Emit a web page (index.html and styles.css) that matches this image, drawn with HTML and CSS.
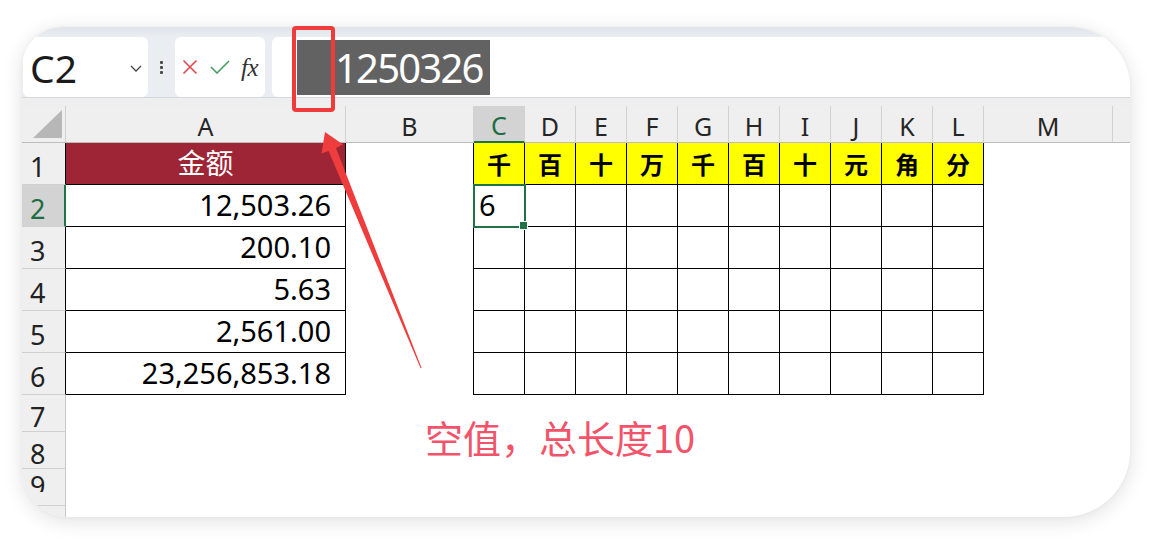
FILE: index.html
```html
<!DOCTYPE html>
<html lang="zh-CN">
<head>
<meta charset="utf-8">
<title>Excel</title>
<link rel="stylesheet" href="styles.css">
</head>
<body>
<div class="page">
  <div class="card">
    <div class="toolbar">
      <div class="namebox">
        <span class="ref">C2</span>
        <svg class="chev" width="12" height="7" viewBox="0 0 12 7"><polyline points="1,1 6,6 11,1" fill="none" stroke="#444" stroke-width="1.3"/></svg>
      </div>
      <div class="grip"><i></i><i></i><i></i></div>
      <div class="fnbox">
        <svg class="ico-x" width="16" height="16" viewBox="0 0 16 16"><path d="M1.5 1.5 L14.5 14.5 M14.5 1.5 L1.5 14.5" stroke="#e0484e" stroke-width="1.6" fill="none"/></svg>
        <svg class="ico-ok" width="20" height="14" viewBox="0 0 20 14"><polyline points="1,7 7,13 19,1" fill="none" stroke="#44a062" stroke-width="1.6"/></svg>
        <span class="fx">fx</span>
      </div>
      <div class="formula"><span class="sel">1250326</span></div>
    </div>
    <div class="strip"></div>
    <div class="sheet">
      <div class="corner"><svg width="29" height="28" viewBox="0 0 29 28"><polygon points="0,28 29,28 29,0" fill="#b7b7b7"/></svg></div>
      <div class="ch">A</div><div class="ch">B</div><div class="ch csel">C</div><div class="ch">D</div><div class="ch">E</div><div class="ch">F</div><div class="ch">G</div><div class="ch">H</div><div class="ch">I</div><div class="ch">J</div><div class="ch">K</div><div class="ch">L</div><div class="ch">M</div><div class="ch"></div>

      <div class="rh rb">1</div><div class="c amt">金额</div><div class="c br"></div>
      <div class="c hd bx">千</div><div class="c hd bx">百</div><div class="c hd bx">十</div><div class="c hd bx">万</div><div class="c hd bx">千</div><div class="c hd bx">百</div><div class="c hd bx">十</div><div class="c hd bx">元</div><div class="c hd bx">角</div><div class="c hd bx">分</div>
      <div></div><div></div>

      <div class="rh rsel">2</div><div class="c num bx">12,503.26</div><div class="c br"></div>
      <div class="c bx active">6</div><div class="c bx"></div><div class="c bx"></div><div class="c bx"></div><div class="c bx"></div><div class="c bx"></div><div class="c bx"></div><div class="c bx"></div><div class="c bx"></div><div class="c bx"></div>
      <div></div><div></div>

      <div class="rh rb">3</div><div class="c num bx">200.10</div><div class="c br"></div>
      <div class="c bx"></div><div class="c bx"></div><div class="c bx"></div><div class="c bx"></div><div class="c bx"></div><div class="c bx"></div><div class="c bx"></div><div class="c bx"></div><div class="c bx"></div><div class="c bx"></div>
      <div></div><div></div>

      <div class="rh rb">4</div><div class="c num bx">5.63</div><div class="c br"></div>
      <div class="c bx"></div><div class="c bx"></div><div class="c bx"></div><div class="c bx"></div><div class="c bx"></div><div class="c bx"></div><div class="c bx"></div><div class="c bx"></div><div class="c bx"></div><div class="c bx"></div>
      <div></div><div></div>

      <div class="rh rb">5</div><div class="c num bx">2,561.00</div><div class="c br"></div>
      <div class="c bx"></div><div class="c bx"></div><div class="c bx"></div><div class="c bx"></div><div class="c bx"></div><div class="c bx"></div><div class="c bx"></div><div class="c bx"></div><div class="c bx"></div><div class="c bx"></div>
      <div></div><div></div>

      <div class="rh rb">6</div><div class="c num bx">23,256,853.18</div><div class="c br"></div>
      <div class="c bx"></div><div class="c bx"></div><div class="c bx"></div><div class="c bx"></div><div class="c bx"></div><div class="c bx"></div><div class="c bx"></div><div class="c bx"></div><div class="c bx"></div><div class="c bx"></div>
      <div></div><div></div>

      <div class="rh">7</div><div></div><div></div><div></div><div></div><div></div><div></div><div></div><div></div><div></div><div></div><div></div><div></div><div></div><div></div>
      <div class="rh">8</div><div></div><div></div><div></div><div></div><div></div><div></div><div></div><div></div><div></div><div></div><div></div><div></div><div></div><div></div>
      <div class="rh cut"><span>9</span></div><div></div><div></div><div></div><div></div><div></div><div></div><div></div><div></div><div></div><div></div><div></div><div></div><div></div><div></div>
      <div class="rh"></div><div></div><div></div><div></div><div></div><div></div><div></div><div></div><div></div><div></div><div></div><div></div><div></div><div></div><div></div>
    </div>
  </div>

  <div class="mark"></div>
  <svg class="arrow" width="1152" height="539" viewBox="0 0 1152 539">
    <polygon points="325,132 343,144.5 336,148 421.6,368 420.6,368.3 328.6,151 321.5,153.5" fill="#ef3c3c"/>
  </svg>
  <div class="note">空值，总长度10</div>
</div>
</body>
</html>
```

FILE: styles.css
```css
* { box-sizing: border-box; }
html, body { margin: 0; padding: 0; background: #fff; }
body { font-family: "Noto Sans", "Noto Sans CJK SC", sans-serif; color: #000; }

.page {
  position: relative;
  width: 1152px;
  height: 539px;
  padding: 27px 0 0 22px;
  overflow: hidden;
}

.card {
  width: 1108px;
  height: 490px;
  border-radius: 40px 60px 66px 46px;
  overflow: hidden;
  background: #fff;
  box-shadow: 0 4px 20px rgba(0, 0, 0, 0.12), 0 0 4px rgba(0, 0, 0, 0.04);
  display: flex;
  flex-direction: column;
}

/* formula bar */
.toolbar {
  flex: none;
  height: 70px;
  display: flex;
  padding: 10px 0 0 1px;
  background: linear-gradient(#e0e3e7 0, #eaedf1 10px);
}
.namebox {
  flex: none;
  width: 125px;
  height: 60px;
  background: #fff;
  border-radius: 6px;
  display: flex;
  align-items: center;
  padding-left: 7px;
}
.ref { flex: 1; font-size: 39px; line-height: 1; color: #1b1b1b; }
.chev { margin-right: 6px; margin-top: 2px; }
.grip {
  flex: none;
  width: 27px;
  display: flex;
  flex-direction: column;
  align-items: center;
  justify-content: center;
  gap: 2px;
}
.grip i { display: block; width: 3px; height: 3px; background: #4a4a4a; border-radius: 1px; }
.fnbox {
  flex: none;
  width: 90px;
  height: 60px;
  background: #fff;
  border-radius: 6px;
  display: flex;
  align-items: center;
  padding-left: 7px;
}
.ico-ok { margin-left: 12px; }
.fx {
  margin-left: 11px;
  font-family: "Liberation Serif", serif;
  font-style: italic;
  font-size: 25px;
  color: #333;
  line-height: 1;
  letter-spacing: -0.5px;
}
.formula {
  flex: 1;
  height: 60px;
  margin-left: 7px;
  background: #fff;
  border-radius: 6px 0 0 6px;
  padding: 3px 0 2px 25px;
}
.sel {
  display: inline-block;
  height: 55px;
  background: #626262;
  color: #fff;
  font-size: 40px;
  letter-spacing: -1.8px;
  line-height: 55px;
  padding: 0 7px 0 38px;
}

.strip {
  flex: none;
  height: 9px;
  background: #eeeeee;
  border-top: 1px solid #d4d7db;
}

/* sheet */
.sheet {
  flex: none;
  display: grid;
  grid-template-columns: 44px 280px 128px repeat(10, 51px) 129px 60px;
  grid-template-rows: 37px repeat(6, 42px) repeat(4, 37px);
}
.corner {
  background: #efefef;
  border-right: 1px solid #cfcfcf;
  border-bottom: 1px solid #bdbdbd;
  display: flex;
  justify-content: flex-end;
  align-items: flex-end;
  padding: 0 3px 4px 0;
}
.ch {
  background: #efefef;
  border-right: 1px solid #d2d2d2;
  border-bottom: 1px solid #bdbdbd;
  font-size: 25px;
  color: #262626;
  display: flex;
  justify-content: center;
  align-items: center;
  padding-top: 4px;
  line-height: 1;
}
.csel {
  background: #d3d3d3;
  color: #1e6c41;
  border-bottom: 2px solid #217346;
}
.rh {
  background: #efefef;
  border-right: 1px solid #c8c8c8;
  border-bottom: 1px solid #d0d0d0;
  font-size: 27px;
  color: #222;
  display: flex;
  align-items: center;
  padding: 6px 0 0 8px;
  line-height: 1;
}
.rb { border-right-color: #000; }
.rsel {
  background: #d3d3d3;
  color: #1e6c41;
  border-right: 2px solid #217346;
}
.cut { align-items: flex-start; padding-top: 3px; }
.cut span { display: block; height: 20px; overflow: hidden; line-height: 27px; }

.c {
  display: flex;
  align-items: center;
  overflow: hidden;
  white-space: nowrap;
  line-height: 1.2;
}
.bx { border-right: 1px solid #000; border-bottom: 1px solid #000; }
.br { border-right: 1px solid #000; }
.amt {
  background: #9e2535;
  color: #fff;
  font-size: 28px;
  justify-content: center;
  border-right: 1px solid #000;
  border-bottom: 1px solid #000;
}
.num { justify-content: flex-end; padding-right: 14px; font-size: 29px; }
.hd {
  background: #ffff00;
  font-size: 24px;
  font-weight: 700;
  justify-content: center;
  padding-top: 3px;
}
.active {
  position: relative;
  z-index: 1;
  overflow: visible;
  outline: 2px solid #217346;
  outline-offset: -1px;
  font-size: 29px;
  padding-left: 5px;
}
.active::after {
  content: "";
  position: absolute;
  right: -4px;
  bottom: -4px;
  width: 7px;
  height: 7px;
  background: #217346;
  border: 1px solid #fff;
}

/* annotations */
.mark {
  position: absolute;
  left: 292px;
  top: 26px;
  width: 43px;
  height: 86px;
  border: 4px solid #ef3b3b;
  border-radius: 4px;
}
.arrow { position: absolute; left: 0; top: 0; pointer-events: none; }
.note {
  position: absolute;
  left: 425px;
  top: 418px;
  font-family: "Noto Sans CJK SC", sans-serif;
  font-size: 38px;
  line-height: 1;
  color: #f2536a;
  white-space: nowrap;
}
```
